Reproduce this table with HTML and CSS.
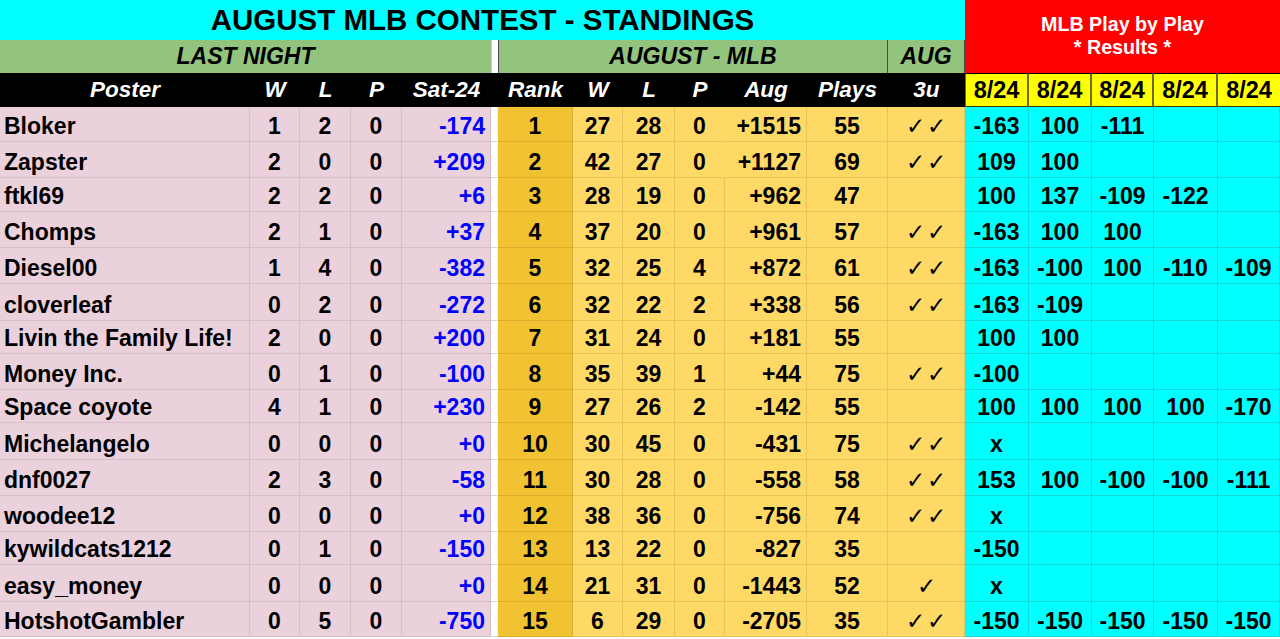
FILE: index.html
```html
<!DOCTYPE html>
<html>
<head>
<meta charset="utf-8">
<link rel="stylesheet" href="styles.css">
</head>
<body>
<div class="sheet">
  <div class="title">AUGUST MLB CONTEST - STANDINGS</div>
  <div class="red"><span>MLB Play by Play</span><span>* Results *</span></div>

  <div class="gh g1">LAST NIGHT</div>
  <div class="gstrip"></div>
  <div class="gh g2">AUGUST - MLB</div>
  <div class="gh g3">AUG</div>

  <div class="hd">Poster</div><div class="hd">W</div><div class="hd">L</div><div class="hd">P</div><div class="hd">Sat-24</div><div class="hd"></div>
  <div class="hd">Rank</div><div class="hd">W</div><div class="hd">L</div><div class="hd">P</div><div class="hd">Aug</div><div class="hd">Plays</div><div class="hd">3u</div>
  <div class="dt first">8/24</div><div class="dt">8/24</div><div class="dt">8/24</div><div class="dt">8/24</div><div class="dt last">8/24</div>

  <!-- 1 -->
  <div class="c pk nm">Bloker</div><div class="c pk">1</div><div class="c pk">2</div><div class="c pk">0</div><div class="c pk rt bl">-174</div><div class="c st"></div>
  <div class="c rk">1</div><div class="c yl">27</div><div class="c yl">28</div><div class="c yl nob">0</div><div class="c yl rt">+1515</div><div class="c yl">55</div><div class="c yl ck">✓✓</div>
  <div class="c cy">-163</div><div class="c cy">100</div><div class="c cy">-111</div><div class="c cy"></div><div class="c cy"></div>
  <!-- 2 -->
  <div class="c pk nm">Zapster</div><div class="c pk">2</div><div class="c pk">0</div><div class="c pk">0</div><div class="c pk rt bl">+209</div><div class="c st"></div>
  <div class="c rk">2</div><div class="c yl">42</div><div class="c yl">27</div><div class="c yl nob">0</div><div class="c yl rt">+1127</div><div class="c yl">69</div><div class="c yl ck">✓✓</div>
  <div class="c cy">109</div><div class="c cy">100</div><div class="c cy"></div><div class="c cy"></div><div class="c cy"></div>
  <!-- 3 -->
  <div class="c pk nm">ftkl69</div><div class="c pk">2</div><div class="c pk">2</div><div class="c pk">0</div><div class="c pk rt bl">+6</div><div class="c st"></div>
  <div class="c rk">3</div><div class="c yl">28</div><div class="c yl">19</div><div class="c yl">0</div><div class="c yl rt">+962</div><div class="c yl">47</div><div class="c yl ck"></div>
  <div class="c cy">100</div><div class="c cy">137</div><div class="c cy">-109</div><div class="c cy">-122</div><div class="c cy"></div>
  <!-- 4 -->
  <div class="c pk nm">Chomps</div><div class="c pk">2</div><div class="c pk">1</div><div class="c pk">0</div><div class="c pk rt bl">+37</div><div class="c st"></div>
  <div class="c rk">4</div><div class="c yl">37</div><div class="c yl">20</div><div class="c yl">0</div><div class="c yl rt">+961</div><div class="c yl">57</div><div class="c yl ck">✓✓</div>
  <div class="c cy">-163</div><div class="c cy">100</div><div class="c cy">100</div><div class="c cy"></div><div class="c cy"></div>
  <!-- 5 -->
  <div class="c pk nm">Diesel00</div><div class="c pk">1</div><div class="c pk">4</div><div class="c pk">0</div><div class="c pk rt bl">-382</div><div class="c st"></div>
  <div class="c rk">5</div><div class="c yl">32</div><div class="c yl">25</div><div class="c yl">4</div><div class="c yl rt">+872</div><div class="c yl">61</div><div class="c yl ck">✓✓</div>
  <div class="c cy">-163</div><div class="c cy">-100</div><div class="c cy">100</div><div class="c cy">-110</div><div class="c cy">-109</div>
  <!-- 6 -->
  <div class="c pk nm">cloverleaf</div><div class="c pk">0</div><div class="c pk">2</div><div class="c pk">0</div><div class="c pk rt bl">-272</div><div class="c st"></div>
  <div class="c rk">6</div><div class="c yl">32</div><div class="c yl">22</div><div class="c yl">2</div><div class="c yl rt">+338</div><div class="c yl">56</div><div class="c yl ck">✓✓</div>
  <div class="c cy">-163</div><div class="c cy">-109</div><div class="c cy"></div><div class="c cy"></div><div class="c cy"></div>
  <!-- 7 -->
  <div class="c pk nm">Livin the Family Life!</div><div class="c pk">2</div><div class="c pk">0</div><div class="c pk">0</div><div class="c pk rt bl">+200</div><div class="c st"></div>
  <div class="c rk">7</div><div class="c yl">31</div><div class="c yl">24</div><div class="c yl">0</div><div class="c yl rt">+181</div><div class="c yl">55</div><div class="c yl ck"></div>
  <div class="c cy">100</div><div class="c cy">100</div><div class="c cy"></div><div class="c cy"></div><div class="c cy"></div>
  <!-- 8 -->
  <div class="c pk nm">Money Inc.</div><div class="c pk">0</div><div class="c pk">1</div><div class="c pk">0</div><div class="c pk rt bl">-100</div><div class="c st"></div>
  <div class="c rk">8</div><div class="c yl">35</div><div class="c yl">39</div><div class="c yl">1</div><div class="c yl rt">+44</div><div class="c yl">75</div><div class="c yl ck">✓✓</div>
  <div class="c cy">-100</div><div class="c cy"></div><div class="c cy"></div><div class="c cy"></div><div class="c cy"></div>
  <!-- 9 -->
  <div class="c pk nm">Space coyote</div><div class="c pk">4</div><div class="c pk">1</div><div class="c pk">0</div><div class="c pk rt bl">+230</div><div class="c st"></div>
  <div class="c rk">9</div><div class="c yl">27</div><div class="c yl">26</div><div class="c yl">2</div><div class="c yl rt">-142</div><div class="c yl">55</div><div class="c yl ck"></div>
  <div class="c cy">100</div><div class="c cy">100</div><div class="c cy">100</div><div class="c cy">100</div><div class="c cy">-170</div>
  <!-- 10 -->
  <div class="c pk nm">Michelangelo</div><div class="c pk">0</div><div class="c pk">0</div><div class="c pk">0</div><div class="c pk rt bl">+0</div><div class="c st"></div>
  <div class="c rk">10</div><div class="c yl">30</div><div class="c yl">45</div><div class="c yl">0</div><div class="c yl rt">-431</div><div class="c yl">75</div><div class="c yl ck">✓✓</div>
  <div class="c cy">x</div><div class="c cy"></div><div class="c cy"></div><div class="c cy"></div><div class="c cy"></div>
  <!-- 11 -->
  <div class="c pk nm">dnf0027</div><div class="c pk">2</div><div class="c pk">3</div><div class="c pk">0</div><div class="c pk rt bl">-58</div><div class="c st"></div>
  <div class="c rk">11</div><div class="c yl">30</div><div class="c yl">28</div><div class="c yl">0</div><div class="c yl rt">-558</div><div class="c yl">58</div><div class="c yl ck">✓✓</div>
  <div class="c cy">153</div><div class="c cy">100</div><div class="c cy">-100</div><div class="c cy">-100</div><div class="c cy">-111</div>
  <!-- 12 -->
  <div class="c pk nm">woodee12</div><div class="c pk">0</div><div class="c pk">0</div><div class="c pk">0</div><div class="c pk rt bl">+0</div><div class="c st"></div>
  <div class="c rk">12</div><div class="c yl">38</div><div class="c yl">36</div><div class="c yl">0</div><div class="c yl rt">-756</div><div class="c yl">74</div><div class="c yl ck">✓✓</div>
  <div class="c cy">x</div><div class="c cy"></div><div class="c cy"></div><div class="c cy"></div><div class="c cy"></div>
  <!-- 13 -->
  <div class="c pk nm">kywildcats1212</div><div class="c pk">0</div><div class="c pk">1</div><div class="c pk">0</div><div class="c pk rt bl">-150</div><div class="c st"></div>
  <div class="c rk">13</div><div class="c yl">13</div><div class="c yl">22</div><div class="c yl">0</div><div class="c yl rt">-827</div><div class="c yl">35</div><div class="c yl ck"></div>
  <div class="c cy">-150</div><div class="c cy"></div><div class="c cy"></div><div class="c cy"></div><div class="c cy"></div>
  <!-- 14 -->
  <div class="c pk nm">easy_money</div><div class="c pk">0</div><div class="c pk">0</div><div class="c pk">0</div><div class="c pk rt bl">+0</div><div class="c st"></div>
  <div class="c rk">14</div><div class="c yl">21</div><div class="c yl">31</div><div class="c yl">0</div><div class="c yl rt">-1443</div><div class="c yl">52</div><div class="c yl ck">✓</div>
  <div class="c cy">x</div><div class="c cy"></div><div class="c cy"></div><div class="c cy"></div><div class="c cy"></div>
  <!-- 15 -->
  <div class="c pk nm">HotshotGambler</div><div class="c pk">0</div><div class="c pk">5</div><div class="c pk">0</div><div class="c pk rt bl">-750</div><div class="c st"></div>
  <div class="c rk">15</div><div class="c yl">6</div><div class="c yl">29</div><div class="c yl">0</div><div class="c yl rt">-2705</div><div class="c yl">35</div><div class="c yl ck">✓✓</div>
  <div class="c cy">-150</div><div class="c cy">-150</div><div class="c cy">-150</div><div class="c cy">-150</div><div class="c cy">-150</div>
</div>
</body>
</html>
```

FILE: styles.css
```css
html, body {
  margin: 0;
  padding: 0;
  background: #ffffff;
}

.sheet {
  display: grid;
  width: 1280px;
  grid-template-columns: 250px 50px 51px 51px 89px 7px 75px 50px 52px 50px 82px 81px 77px 64px 63px 62px 64px 62px;
  grid-template-rows: 40px 33px 34px 35px 36px 34px 36px 36px 37px 33px 36px 33px 37px 36px 36px 33px 37px 35px;
  font-family: "Liberation Sans", Arial, sans-serif;
  font-weight: bold;
  color: #000;
}

.title {
  grid-column: 1 / 14;
  grid-row: 1;
  background: #00ffff;
  display: flex;
  align-items: center;
  justify-content: center;
  font-size: 29.5px;
}

.red {
  grid-column: 14 / 19;
  grid-row: 1 / 3;
  background: #ff0000;
  color: #fff;
  display: flex;
  flex-direction: column;
  align-items: center;
  justify-content: center;
  font-size: 19.7px;
  line-height: 23px;
  padding-bottom: 1px;
}

.gh {
  background: #93c47d;
  display: flex;
  align-items: center;
  justify-content: center;
  font-style: italic;
  font-size: 23px;
  box-sizing: border-box;
}
.g1 { grid-column: 1 / 6; }
.g2 { grid-column: 7 / 13; border-left: 1px solid #4a4a4a; border-right: 1px solid #4a4a4a; }
.g3 { grid-column: 13 / 14; border-right: 1px solid #4a4a4a; }
.gstrip {
  background: #fff;
  border-left: 1px solid #cfcfcf;
}

.hd {
  background: #000;
  color: #fff;
  font-style: italic;
  font-size: 22.5px;
  display: flex;
  align-items: center;
  justify-content: center;
  box-sizing: border-box;
}

.dt {
  background: #ffff00;
  font-size: 23.5px;
  display: flex;
  align-items: center;
  justify-content: center;
  box-sizing: border-box;
  border-top: 1px solid #000;
  border-bottom: 1px solid #3a3a00;
  border-right: 2px solid #6e6e00;
  padding-top: 1px;
}
.dt.first { border-left: 1px solid #6e6e00; }
.dt.last { border-right: none; }

.c {
  display: flex;
  align-items: flex-end;
  justify-content: center;
  font-size: 23px;
  padding-bottom: 1px;
  box-sizing: border-box;
  white-space: nowrap;
  border-right: 1px solid transparent;
  border-bottom: 1px solid transparent;
}

.pk {
  background: #ead1dc;
  border-right-color: #d6bfc9;
  border-bottom-color: #d6bfc9;
}
.nm { justify-content: flex-start; padding-left: 4px; }
.rt { justify-content: flex-end; padding-right: 5px; }
.bl { color: #0000ff; }

.st {
  background: #fff;
  border-bottom-color: #d8d2e2;
  border-right-color: #f3f0f6;
}

.rk {
  background: #f1c232;
  border-right-color: #dcae2c;
  border-bottom-color: #dcae2c;
}

.yl {
  background: #ffd966;
  border-right-color: #e7c35c;
  border-bottom-color: #e7c35c;
}
.yl.nob { border-right-color: #ffd966; }

.ck {
  font-family: "DejaVu Sans", sans-serif;
  font-weight: 200;
  font-size: 23px;
  letter-spacing: 2px;
  padding-left: 2px;
  padding-bottom: 2px;
}

.cy {
  background: #00ffff;
  border-right-color: #14d9d9;
  border-bottom-color: #14d9d9;
}
```
